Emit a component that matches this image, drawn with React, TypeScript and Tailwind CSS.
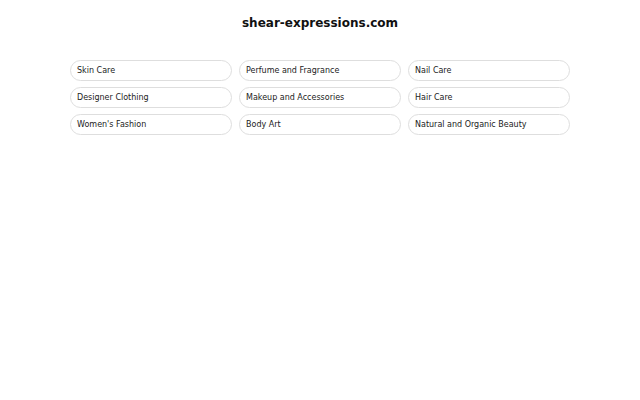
import React from "react";

const items = [
  "Skin Care",
  "Perfume and Fragrance",
  "Nail Care",
  "Designer Clothing",
  "Makeup and Accessories",
  "Hair Care",
  "Women's Fashion",
  "Body Art",
  "Natural and Organic Beauty",
];

export default function App() {
  return (
    <div className="w-[640px] h-[400px] bg-white font-['DejaVu_Sans',sans-serif] text-[#222]">
      <div className="flex flex-col items-center pt-[15px]">
        <h1 className="text-[12px] leading-[16px] font-bold text-[#111]">shear-expressions.com</h1>
        <div className="grid grid-cols-3 gap-x-[7px] gap-y-[6px] w-[500px] mt-[29px]">
          {items.map((item) => (
            <div
              key={item}
              className="h-[21px] flex items-center px-[6px] rounded-full border border-[#dedede] text-[8px] text-[#222]"
            >
              {item}
            </div>
          ))}
        </div>
      </div>
    </div>
  );
}
